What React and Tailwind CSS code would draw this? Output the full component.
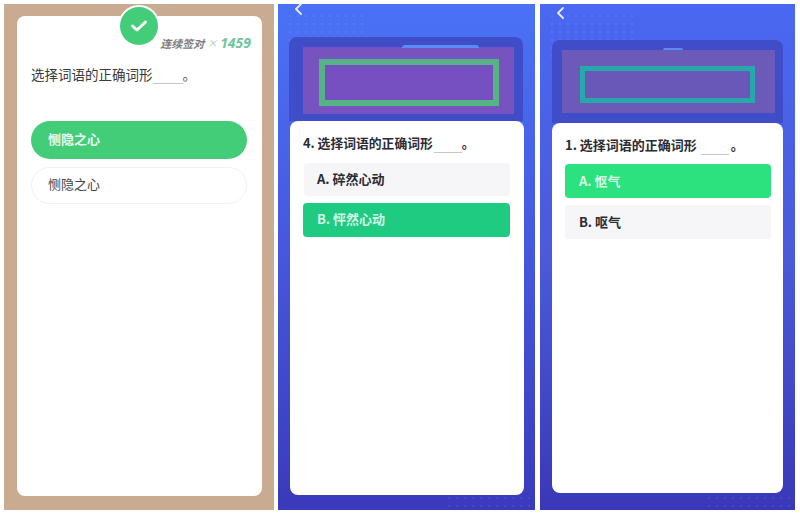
const font = { fontFamily: '"Noto Sans CJK SC", "Noto Sans", sans-serif' };

function Back({ className }) {
  return (
    <svg className={className} width="9" height="12" viewBox="0 0 9 12" fill="none" stroke="#e6ecff" strokeWidth="1.8" strokeLinecap="round" strokeLinejoin="round">
      <path d="M7 1 L2 6 L7 11" />
    </svg>
  );
}

function Blank({ className }) {
  return <span className={`inline-block border-b border-[#c4c4cc] h-[13px] ${className}`} />;
}

function Dots({ className }) {
  return (
    <div className={`absolute bg-[radial-gradient(circle,rgba(255,255,255,0.08)_1px,transparent_1.2px)] bg-[length:8px_8px] ${className}`} />
  );
}

export default function App() {
  return (
    <div style={font} className="w-[800px] h-[514px] bg-white flex pt-1 pl-1 overflow-hidden">
      {/* Panel 1 */}
      <div className="relative w-[270px] h-[506px] bg-[#c9ab91] pt-3 pl-[13px]">
        <div className="relative w-[245px] h-[480px] bg-white rounded-lg pt-[20px] pl-[14px] pr-[15px]">
          <div className="absolute -top-[9px] left-[103px] w-[38px] h-[38px] rounded-full bg-[#43cd78] flex items-center justify-center ring-2 ring-white">
            <svg width="18" height="14" viewBox="0 0 18 14" fill="none" stroke="white" strokeWidth="3" strokeLinecap="round" strokeLinejoin="round">
              <path d="M2.5 7 L7 11 L15.5 3" />
            </svg>
          </div>
          <div className="flex justify-end items-center h-[14px] italic -mr-[4px] gap-[3px] leading-none">
            <span className="text-[11px] font-bold text-[#7d7d7d]">连续签对</span>
            <span className="text-[10px] text-[#9fc9b4]">×</span>
            <span className="text-[14px] font-bold text-[#6fc6a0]" style={{ fontFamily: '"Open Sans", sans-serif' }}>1459</span>
          </div>
          <div className="mt-[14px] text-[13.5px] leading-[20px] text-[#3a3a3a] flex items-end">
            选择词语的正确词形<Blank className="w-[30px]" /><span className="w-[8px] text-[#555555]">。</span>
          </div>
          <div className="mt-[37px] h-[38px] rounded-full bg-[#43cd78] flex items-center pl-[17px] pb-[2px] text-[13px] font-bold text-[#eafaf0]">
            恻隐之心
          </div>
          <div className="mt-[8px] h-[37px] rounded-full border border-[#f1f1f1] flex items-center pl-[16px] pb-[3px] text-[13px] text-[#444444]">
            恻隐之心
          </div>
        </div>
      </div>

      {/* Panel 2 */}
      <div className="relative ml-[4px] w-[257px] h-[506px] bg-gradient-to-b from-[#4a72f6] via-[#4657dc] to-[#3a3abb] overflow-hidden">
        <Dots className="top-[8px] left-[8px] w-[80px] h-[50px]" />
        <Dots className="bottom-0 right-0 w-[90px] h-[16px]" />
        <Back className="absolute -top-[1px] left-[16px]" />
        <div className="relative ml-[11px] mt-[33px] w-[234px] h-[84px] bg-[#3f4dc8] rounded-t-lg pt-[10px] pl-[14px]">
          <div className="absolute top-[8px] left-[113px] w-[77px] h-[3px] rounded-t-full bg-[#5b8cf5]" />
          <div className="w-[211px] h-[67px] bg-[#7653bf] pt-[12px] pl-[16px]">
            <div className="w-[180px] h-[47px] border-[6px] border-[#55b386] bg-[#7650c0]" />
          </div>
        </div>
        <div className="relative ml-[12px] w-[234px] h-[374px] bg-white rounded-lg pt-[12px] px-[13px] text-[#2b2b33]">
          <div className="flex items-end h-[20px] text-[12.8px] font-bold leading-[20px]">
            4. 选择词语的正确词形<Blank className="w-[28px] ml-[1px]" /><span className="w-[12px]">。</span>
          </div>
          <div className="mt-[10px] ml-[1px] mr-[1px] h-[33px] rounded-sm bg-[#f6f6f9] flex items-center pl-[13px] pb-[2px] text-[13px] font-bold">
            A. 碎然心动
          </div>
          <div className="mt-[7px] mr-[1px] h-[34px] rounded bg-[#1fcb80] flex items-center pl-[14px] pb-[2px] text-[13px] font-bold text-[#d5f5e6]">
            B. 怦然心动
          </div>
        </div>
      </div>

      {/* Panel 3 */}
      <div className="relative ml-[5px] w-[255px] h-[506px] bg-gradient-to-b from-[#4a68f2] via-[#4a5ada] to-[#3a38b8] overflow-hidden">
        <Dots className="top-[8px] left-[8px] w-[90px] h-[50px]" />
        <Dots className="bottom-0 right-0 w-[90px] h-[16px]" />
        <Back className="absolute top-[3px] left-[16px]" />
        <div className="relative ml-[12px] mt-[36px] w-[231px] h-[83px] bg-[#3f4dc8] rounded-t-lg pt-[10px] pl-[10px]">
          <div className="absolute top-[8px] left-[111px] w-[20px] h-[2px] rounded-t-full bg-[#5b8cf5]" />
          <div className="w-[213px] h-[63px] bg-[#6c5ab8] pt-[16px] pl-[18px]">
            <div className="w-[175px] h-[37px] border-[5px] border-[#27a8ab] bg-[#6a58b8]" />
          </div>
        </div>
        <div className="relative ml-[12px] w-[231px] h-[370px] bg-white rounded-lg pt-[12px] px-[13px] text-[#2b2b33]">
          <div className="flex items-end h-[20px] text-[13px] font-bold leading-[20px]">
            1. 选择词语的正确词形<Blank className="w-[28px] ml-[4px]" /><span className="ml-[2px] w-[14px]">。</span>
          </div>
          <div className="mt-[9px] -mr-[1px] h-[34px] rounded bg-[#2be27f] flex items-center pl-[14px] text-[13px] font-bold text-[#d8f8e6]">
            A. 怄气
          </div>
          <div className="mt-[7px] -mr-[1px] h-[34px] rounded-sm bg-[#f6f6f8] flex items-center pl-[14px] text-[13px] font-bold">
            B. 呕气
          </div>
        </div>
      </div>
    </div>
  );
}
